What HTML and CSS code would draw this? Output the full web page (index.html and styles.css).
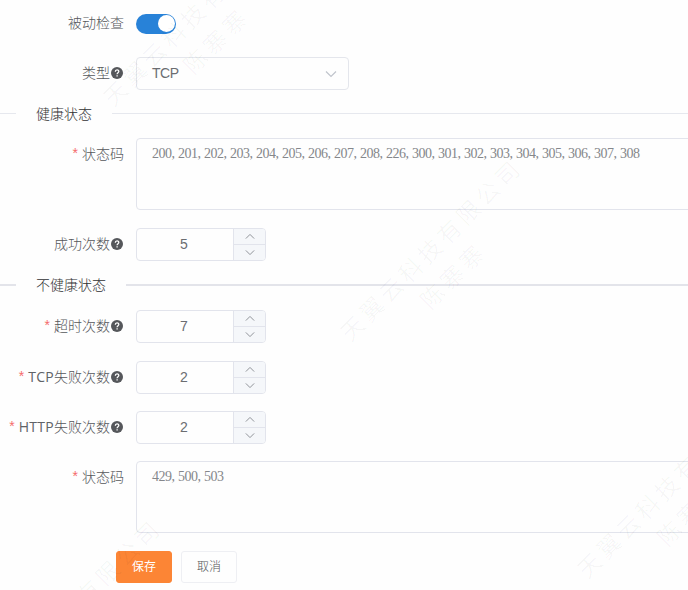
FILE: index.html
```html
<!DOCTYPE html>
<html lang="zh-CN">
<head>
<meta charset="utf-8">
<title>健康检查</title>
<link rel="stylesheet" href="styles.css">
</head>
<body>
<svg class="defs" width="0" height="0">
  <symbol id="help" viewBox="0 0 12 12"><circle cx="6" cy="6" r="6" fill="currentColor"/><path d="M4.3 4.7C4.3 2.3 7.8 2.4 7.8 4.5C7.8 5.7 6.1 5.7 6.1 7.2M6.1 8.2V9.5" fill="none" stroke="#fff" stroke-width="1.3"/></symbol>
  <symbol id="down" viewBox="0 0 12 8"><path d="M1 1.5L6 6.5L11 1.5" fill="none" stroke="currentColor" stroke-width="1.2"/></symbol>
  <symbol id="up" viewBox="0 0 12 8"><path d="M1 6.5L6 1.5L11 6.5" fill="none" stroke="currentColor" stroke-width="1.2"/></symbol>
</svg>
<form class="form">
  <div class="row row-switch"><label class="label">被动检查</label><span class="switch"><i class="knob"></i></span></div>
  <div class="row row-select"><label class="label">类型<svg class="help"><use href="#help"/></svg></label>
    <div class="select"><span>TCP</span><svg class="caret"><use href="#down"/></svg></div></div>

  <div class="divider"><span class="divider-text">健康状态</span></div>

  <div class="row row-area"><label class="label required">状态码</label>
    <div class="area">200, 201, 202, 203, 204, 205, 206, 207, 208, 226, 300, 301, 302, 303, 304, 305, 306, 307, 308</div></div>
  <div class="row row-success"><label class="label">成功次数<svg class="help"><use href="#help"/></svg></label>
    <div class="number"><span class="value">5</span><span class="steps"><b class="step"><svg><use href="#up"/></svg></b><b class="step"><svg><use href="#down"/></svg></b></span></div></div>

  <div class="divider divider-strong"><span class="divider-text">不健康状态</span></div>

  <div class="row"><label class="label required">超时次数<svg class="help"><use href="#help"/></svg></label>
    <div class="number"><span class="value">7</span><span class="steps"><b class="step"><svg><use href="#up"/></svg></b><b class="step"><svg><use href="#down"/></svg></b></span></div></div>
  <div class="row row-tcp"><label class="label required"><span class="latin">TCP</span>失败次数<svg class="help"><use href="#help"/></svg></label>
    <div class="number"><span class="value">2</span><span class="steps"><b class="step"><svg><use href="#up"/></svg></b><b class="step"><svg><use href="#down"/></svg></b></span></div></div>
  <div class="row row-http"><label class="label required"><span class="latin">HTTP</span>失败次数<svg class="help"><use href="#help"/></svg></label>
    <div class="number"><span class="value">2</span><span class="steps"><b class="step"><svg><use href="#up"/></svg></b><b class="step"><svg><use href="#down"/></svg></b></span></div></div>
  <div class="row row-area"><label class="label required">状态码</label><div class="area">429, 500, 503</div></div>

  <div class="actions"><button type="button" class="btn btn-primary">保存</button><button type="button" class="btn">取消</button></div>
</form>

<div class="marks">
  <div class="mark mark-a">天翼云科技有限公司<br><span>陈寨寨</span></div>
  <div class="mark mark-b">天翼云科技有<br><span>陈寨寨</span></div>
  <div class="mark mark-c">天翼云科技有<br><span>陈寨</span></div>
  <div class="mark mark-d">有限公司</div>
</div>
</body>
</html>
```
FILE: styles.css
```css
* { box-sizing: border-box; }
body {
  margin: 0;
  width: 688px;
  height: 590px;
  overflow: hidden;
  position: relative;
  background: #fefefe;
  color: #55575b;
  font: 300 14px/32px "Noto Sans", "Noto Sans CJK SC", sans-serif;
}
.defs { position: absolute; }
.form { display: flex; flex-direction: column; padding-top: 7px; overflow: hidden; }
.row { display: flex; margin-bottom: 18px; min-height: 33px; }
.row-switch { margin-bottom: 17px; align-items: center; }
.row-switch .label { padding-bottom: 1px; }
.row-select { margin-bottom: 8px; }
.row-success { margin-bottom: 8px; }
.row-tcp { margin-bottom: 17px; }
.row-http { margin-bottom: 17px; }
.label {
  flex: none;
  display: flex;
  justify-content: flex-end;
  align-items: center;
  width: 136px;
  height: 32px;
  padding-right: 12px;
  white-space: nowrap;
}
.latin { font-weight: 400; font-family: "Open Sans", sans-serif; color: #606266; letter-spacing: 0.3px; }
.required::before { content: "*"; color: #f56c6c; margin: -2px 4px 0 0; font-family: "Liberation Sans", sans-serif; }
.help { width: 12px; height: 12px; margin: 0 1px 0 1px; }

.switch { width: 40px; height: 20px; padding: 1px 1px; border-radius: 10px; background: #2882d8; display: flex; justify-content: flex-end; }
.knob { width: 17px; height: 17px; border-radius: 50%; background: #fff; }

.select {
  display: flex;
  align-items: center;
  justify-content: space-between;
  width: 213px;
  height: 33px;
  padding: 0 11px 0 15px;
  border: 1px solid #e4e6ec;
  border-radius: 4px;
  color: #6b6d71;
  font-family: "Liberation Sans", sans-serif;
}
.select span { margin-top: -1px; letter-spacing: -0.5px; }
.caret { width: 12px; height: 8px; color: #c0c4cc; }

.divider { display: flex; align-items: center; height: 32px; margin-bottom: 8px; color: #303133; }
.divider::before { content: ""; width: 16px; height: 1px; margin-top: -2px; background: #e6e8ee; }
.divider::after { content: ""; flex: 1; height: 1px; margin-top: -2px; background: #e6e8ee; }
.divider-text { padding: 0 20px; }
.divider-strong { margin-bottom: 9px; }
.divider-strong::before, .divider-strong::after { height: 2px; margin-top: -1px; background: #e3e4ea; }

.area {
  flex: none;
  width: 600px;
  height: 72px;
  padding: 5px 15px;
  border: 1px solid #e2e4ec;
  border-radius: 4px;
  color: #85878b;
  font: 14px/20px "Liberation Serif", serif;
  letter-spacing: -0.5px;
  word-spacing: 0.5px;
  white-space: nowrap;
}

.number {
  display: flex;
  width: 130px;
  height: 33px;
  border: 1px solid #e2e4ec;
  border-radius: 4px;
  overflow: hidden;
  color: #6b6d71;
  font-family: "Liberation Sans", sans-serif;
}
.value { flex: 1; text-align: center; line-height: 31px; padding-right: 2px; }
.steps { width: 32px; display: flex; flex-direction: column; border-left: 1px solid #e2e4ec; background: #f5f7fa; }
.step { flex: 1; display: flex; align-items: center; justify-content: center; color: #909399; }
.step + .step { border-top: 1px solid #e2e4ec; }
.step svg { width: 10px; height: 7px; }
.step + .step svg { margin-top: -1px; }

.actions { display: flex; gap: 9px; padding-left: 116px; }
.btn {
  width: 56px;
  height: 32px;
  padding: 0 0 3px;
  border: 1px solid #eeeff3;
  border-radius: 3px;
  background: #fefefe;
  color: #55575b;
  font: 300 12px/26px "Noto Sans CJK SC", sans-serif;
}
.btn-primary { border-color: #fc8535; background: #fc8535; color: #fff; font-weight: 400; }

.marks { position: absolute; inset: 0; overflow: hidden; pointer-events: none; }
.mark {
  position: absolute;
  width: 260px;
  height: 70px;
  font: 23px/34px "Liberation Serif", "Noto Sans CJK SC", serif;
  letter-spacing: 4.3px;
  white-space: nowrap;
  color: rgba(0, 0, 0, 0.036);
  transform-origin: 12px 17px;
  transform: rotate(-45deg);
}
.mark span { padding-left: 79px; }
.mark-a { left: 342px; top: 312px; }
.mark-b { left: 105px; top: 77px; }
.mark-c { left: 579px; top: 549px; }
.mark-d { left: 78px; top: 576px; }
```
